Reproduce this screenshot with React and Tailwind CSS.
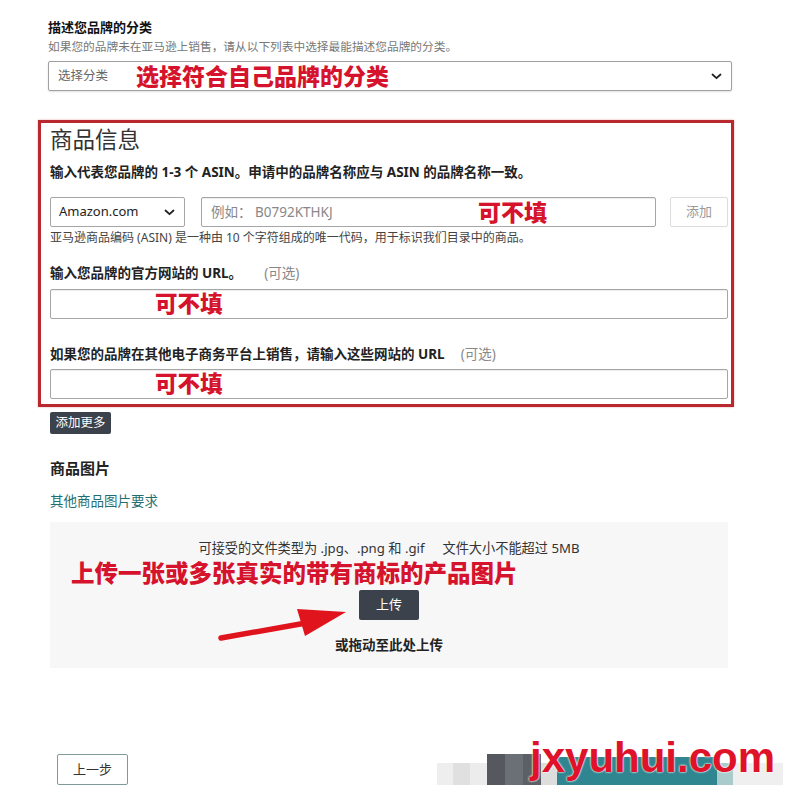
import React from "react";

const Chevron = ({ className = "" }) => (
  <svg className={className} width="11" height="7" viewBox="0 0 11 7" fill="none">
    <path d="M1.5 1.5 L5.5 5.2 L9.5 1.5" stroke="#222" strokeWidth="1.8" strokeLinecap="round" strokeLinejoin="round" />
  </svg>
);

const Note = ({ children, className = "" }) => (
  <span
    className={`font-black text-[#d5132c] tracking-[0px] [text-shadow:0_0_1px_#fff] ${className}`}
  >
    {children}
  </span>
);

const TextInput = ({ note }) => (
  <div className="flex h-[30px] w-full items-center rounded-[2px] border border-[#a6a6a6] bg-white pl-[104px] shadow-[inset_0_1px_1px_rgba(0,0,0,0.08)]">
    {note && <Note className="text-[22.5px] leading-[26px]">{note}</Note>}
  </div>
);

export default function App() {
  return (
    <div className="relative h-[800px] w-[792px] overflow-hidden bg-white font-['Noto_Sans','Noto_Sans_CJK_SC',sans-serif] text-[#111]">
      <div className="px-[48px] pt-[19px]">
        <div className="text-[13px] font-bold leading-[16px] text-[#111]">描述您品牌的分类</div>
        <div className="mt-[4px] text-[11.7px] leading-[14px] text-[#777]">
          如果您的品牌未在亚马逊上销售，请从以下列表中选择最能描述您品牌的分类。
        </div>
        <div className="mt-[8px] flex h-[30px] w-[684px] items-center rounded-[2px] border border-[#a0a0a0] bg-white pl-[9px] pr-[9px] shadow-[0_1px_2px_rgba(0,0,0,0.12)]">
          <span className="w-[78px] text-[12.5px] text-[#666]">选择分类</span>
          <Note className="text-[23px] leading-[26px]">选择符合自己品牌的分类</Note>
          <Chevron className="ml-auto" />
        </div>

        {/* 商品信息 */}
        <div className="ml-[-10px] mt-[29px] w-[696px] border-[3px] border-[#b8282e] pb-[5px] pl-[9px] pr-[3px] pt-[4px] shadow-[0_0_2px_rgba(184,40,46,0.4)]">
          <div className="text-[22.5px] leading-[26px] text-[#333]">商品信息</div>
          <div className="mt-[11px] text-[13.5px] font-bold leading-[16px] text-[#222]">
            输入代表您品牌的 1-3 个 ASIN。申请中的品牌名称应与 ASIN 的品牌名称一致。
          </div>
          <div className="mt-[17px] flex h-[30px] items-center">
            <div className="flex h-[30px] w-[135px] items-center rounded-[2px] border border-[#a6a6a6] bg-white pl-[8px] pr-[9px]">
              <span className="text-[13px] text-[#222]">Amazon.com</span>
              <Chevron className="ml-auto" />
            </div>
            <div className="ml-[16px] flex h-[30px] w-[455px] items-center rounded-[2px] border border-[#a6a6a6] bg-white pl-[9px] shadow-[inset_0_1px_1px_rgba(0,0,0,0.08)]">
              <span className="w-[267px] text-[13.5px] text-[#888]">例如： B0792KTHKJ</span>
              <Note className="text-[23px] leading-[26px]">可不填</Note>
            </div>
            <div className="ml-[14px] flex h-[30px] w-[58px] items-center justify-center rounded-[2px] border border-[#ddd] bg-white text-[13px] text-[#999]">
              添加
            </div>
          </div>
          <div className="mt-[4px] text-[12px] leading-[14px] text-[#444]">
            亚马逊商品编码 (ASIN) 是一种由 10 个字符组成的唯一代码，用于标识我们目录中的商品。
          </div>

          <div className="mt-[20px] text-[13.5px] font-bold leading-[16px] text-[#222]">
            输入您品牌的官方网站的 URL。
            <span className="ml-[22px] font-normal text-[#888]">(可选)</span>
          </div>
          <div className="mt-[8px]">
            <TextInput note="可不填" />
          </div>

          <div className="mt-[27px] text-[13.5px] font-bold leading-[16px] text-[#222]">
            如果您的品牌在其他电子商务平台上销售，请输入这些网站的 URL
            <span className="ml-[16px] font-normal text-[#888]">(可选)</span>
          </div>
          <div className="mt-[7px]">
            <TextInput note="可不填" />
          </div>
        </div>

        <div className="ml-[2px] mt-[5px] flex h-[22px] w-[61px] items-center justify-center rounded-[2px] bg-[#3b424c] text-[12.5px] text-white">
          添加更多
        </div>

        <div className="ml-[2px] mt-[24px] text-[15px] font-bold leading-[20px] text-[#222]">商品图片</div>
        <div className="ml-[2px] mt-[15px] text-[13.5px] leading-[16px] text-[#1f6f72]">其他商品图片要求</div>

        {/* upload area */}
        <div className="relative ml-[2px] mt-[13px] flex h-[146px] w-[678px] flex-col items-center bg-[#f7f7f8] pt-[19px]">
          <div className="text-[13.2px] leading-[14px] text-[#333]">
            可接受的文件类型为 .jpg、.png 和 .gif<span className="ml-[18px]">文件大小不能超过 5MB</span>
          </div>
          <div className="mt-[5px] self-start pl-[21px]">
            <Note className="text-[23.5px] leading-[26px]">上传一张或多张真实的带有商标的产品图片</Note>
          </div>
          <div className="mt-[2px] flex h-[30px] w-[60px] items-center justify-center rounded-[2px] bg-[#3b424c] text-[13px] text-white">
            上传
          </div>
          <div className="mt-[17px] text-[13.5px] font-bold leading-[16px] text-[#222]">或拖动至此处上传</div>
          <svg className="pointer-events-none absolute inset-0" width="678" height="146" viewBox="0 0 678 146">
            <line x1="171" y1="116" x2="256" y2="101" stroke="#e0141c" strokeWidth="5.5" strokeLinecap="round" />
            <polygon points="247,87 296,90 255,114" fill="#e0141c" />
          </svg>
        </div>

        <div className="ml-[9px] mt-[86px] flex h-[31px] w-[71px] items-center justify-center rounded-[2px] border border-[#7f9a9a] bg-white text-[13px] text-[#333]">
          上一步
        </div>
      </div>

      {/* watermark */}
      <div className="absolute left-[437px] top-[752px] flex h-[33px] items-end">
        <div className="h-[22px] w-[16px] bg-[#eeeeee]" />
        <div className="h-[22px] w-[17px] bg-[#e0e0e0]" />
        <div className="h-[22px] w-[17px] bg-[#ececec]" />
        <div className="h-[31px] w-[18px] bg-[#55595f]" />
        <div className="h-[31px] w-[18px] bg-[#6b7077]" />
        <div className="h-[31px] w-[18px] bg-[#5b6067]" />
        <div className="h-[22px] w-[16px] bg-[#dddddd]" />
        <div className="h-[28px] w-[160px] bg-[#2f8590]" />
        <div className="h-[22px] w-[16px] bg-[#a9cbcc]" />
        <div className="h-[22px] w-[50px] bg-[#efefef]" />
      </div>
      <div className="absolute left-[530px] top-[734px] font-['Liberation_Sans',sans-serif] text-[42px] font-bold leading-[48px] text-[#e0122a] [text-shadow:0_0_2px_#fff,0_0_2px_#fff]">
        jxyuhui.com
      </div>
    </div>
  );
}
